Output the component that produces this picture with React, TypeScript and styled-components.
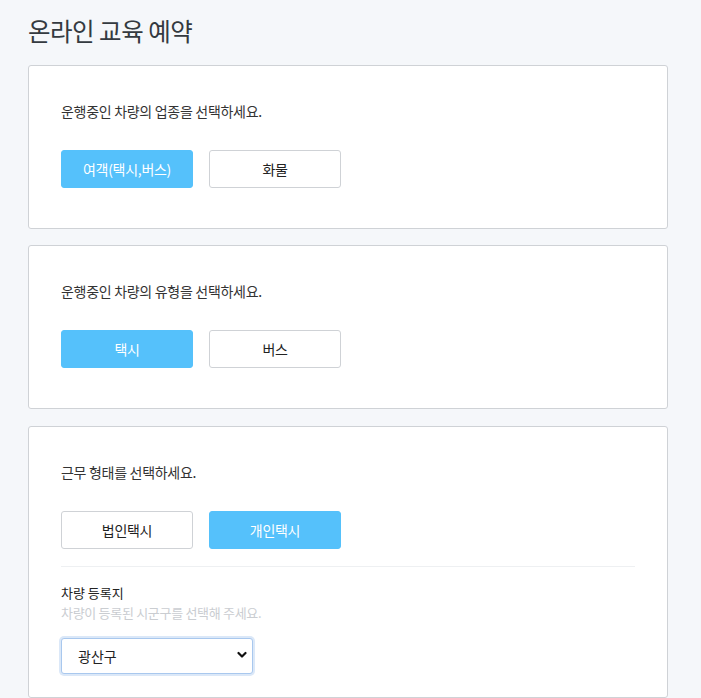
import React, { useState } from "react";
import styled, { createGlobalStyle } from "styled-components";

const Global = createGlobalStyle`
  html, body { margin: 0; padding: 0; background: #f5f7fa; }
  body { font-family: "Noto Sans CJK KR", "Noto Sans", sans-serif; color: #333; }
  * { box-sizing: border-box; }
`;

const Page = styled.div`
  padding: 12px 33px 0 28px;
  display: flex;
  flex-direction: column;
`;

const Title = styled.h1`
  margin: 0 0 15px;
  font-size: 24.5px;
  font-weight: 400;
  line-height: 38px;
  color: #343a40;
  letter-spacing: -0.5px;
`;

const Cards = styled.div`
  display: flex;
  flex-direction: column;
  gap: 16px;
`;

const Card = styled.section<{ $last?: boolean }>`
  background: #fff;
  border: 1px solid #cfd2d6;
  border-radius: 3px;
  padding: ${(p) => (p.$last ? "35px 32px 23px" : "35px 32px 40px")};
  ${(p) => (p.$last ? "margin-top: 1px;" : "")}
`;

const Question = styled.p`
  margin: 0 0 29px;
  font-size: 14px;
  line-height: 20px;
  color: #333;
  letter-spacing: -0.3px;
`;

const Options = styled.div`
  display: flex;
  gap: 16px;
`;

const Option = styled.button<{ $active: boolean }>`
  width: 132px;
  height: 38px;
  border-radius: 3px;
  border: 1px solid ${(p) => (p.$active ? "#55c1fb" : "#cfd2d6")};
  background: ${(p) => (p.$active ? "#55c1fb" : "#fff")};
  color: ${(p) => (p.$active ? "#fff" : "#222")};
  font-family: inherit;
  font-size: 14px;
  letter-spacing: -0.3px;
  cursor: pointer;
  padding: 0;
`;

const Divider = styled.hr`
  margin: 17px 0 16px;
  border: 0;
  border-top: 1px solid #eef0f2;
`;

const FieldLabel = styled.div`
  font-size: 13px;
  line-height: 20px;
  color: #222;
`;

const FieldHint = styled.div`
  font-size: 13px;
  line-height: 20px;
  color: #cacdd1;
  letter-spacing: -0.3px;
  margin-bottom: 15px;
`;

const SelectWrap = styled.div`
  position: relative;
  width: 192px;
  height: 36px;
`;

const Select = styled.select`
  appearance: none;
  width: 100%;
  height: 100%;
  border: 1px solid #a9c8ee;
  border-radius: 3px;
  box-shadow: 0 0 0 2px #dbe8f8;
  background: #fff;
  padding: 0 30px 0 16px;
  font-family: inherit;
  font-size: 14px;
  color: #222;
  outline: none;
`;

const Chevron = styled.svg`
  position: absolute;
  right: 6px;
  top: 13px;
  pointer-events: none;
`;

type Group = { question: string; options: string[] };

const groups: Group[] = [
  { question: "운행중인 차량의 업종을 선택하세요.", options: ["여객(택시,버스)", "화물"] },
  { question: "운행중인 차량의 유형을 선택하세요.", options: ["택시", "버스"] },
];

export default function App() {
  const [sel, setSel] = useState<number[]>([0, 0, 1]);
  const pick = (g: number, i: number) =>
    setSel((s) => s.map((v, k) => (k === g ? i : v)));

  return (
    <>
      <Global />
      <Page>
        <Title>온라인 교육 예약</Title>
        <Cards>
          {groups.map((g, gi) => (
            <Card key={gi}>
              <Question>{g.question}</Question>
              <Options>
                {g.options.map((o, oi) => (
                  <Option key={o} $active={sel[gi] === oi} onClick={() => pick(gi, oi)}>
                    {o}
                  </Option>
                ))}
              </Options>
            </Card>
          ))}
          <Card $last>
            <Question>근무 형태를 선택하세요.</Question>
            <Options>
              {["법인택시", "개인택시"].map((o, oi) => (
                <Option key={o} $active={sel[2] === oi} onClick={() => pick(2, oi)}>
                  {o}
                </Option>
              ))}
            </Options>
            <Divider />
            <FieldLabel>차량 등록지</FieldLabel>
            <FieldHint>차량이 등록된 시군구를 선택해 주세요.</FieldHint>
            <SelectWrap>
              <Select defaultValue="광산구">
                <option>광산구</option>
                <option>남구</option>
                <option>동구</option>
                <option>북구</option>
                <option>서구</option>
              </Select>
              <Chevron width="10" height="8" viewBox="0 0 10 8">
                <path d="M1.5 2 L5 5.5 L8.5 2" fill="none" stroke="#111" strokeWidth="2.2" strokeLinecap="round" strokeLinejoin="round" />
              </Chevron>
            </SelectWrap>
          </Card>
        </Cards>
      </Page>
    </>
  );
}
